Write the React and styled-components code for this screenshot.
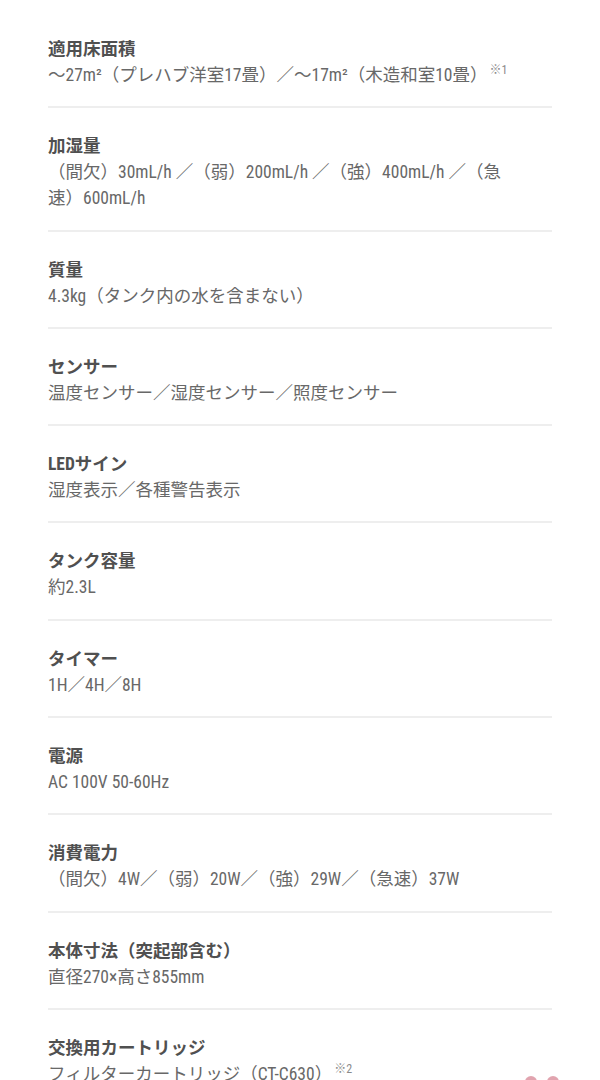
import React from 'react';
import styled, { createGlobalStyle } from 'styled-components';

const GlobalStyle = createGlobalStyle`
  html, body {
    margin: 0;
    padding: 0;
    background: #ffffff;
  }
  body {
    font-family: 'Roboto Condensed', 'Liberation Sans Narrow', 'Noto Sans CJK JP', sans-serif;
    -webkit-font-smoothing: antialiased;
  }
`;

const Page = styled.main`
  padding: 11px 48px 0;
  min-height: 1080px;
  box-sizing: border-box;
`;

const SpecList = styled.dl`
  margin: 0;
`;

const SpecRow = styled.div`
  padding: 25px 0 18.3px;
  border-bottom: 2px solid #eeeeee;

  &:last-child {
    border-bottom: none;
  }
`;

const Label = styled.dt`
  font-size: 17.5px;
  line-height: 26px;
  font-weight: 700;
  color: #505050;
`;

const Value = styled.dd`
  margin: 0;
  padding-right: 42px;
  font-size: 17.5px;
  line-height: 26px;
  color: #686868;
`;

const Note = styled.sup`
  font-size: 12px;
  color: #8a8a8a;
  margin-left: 2px;
  vertical-align: 7px;
  line-height: 0;
`;

const Peek = styled.svg`
  position: fixed;
  right: 38px;
  bottom: 0;
  width: 40px;
  height: 6px;
`;

const specs = [
  {
    label: '適用床面積',
    value: '〜27m²（プレハブ洋室17畳）／〜17m²（木造和室10畳）',
    note: '※1',
  },
  {
    label: '加湿量',
    value: '（間欠）30mL/h ／（弱）200mL/h ／（強）400mL/h ／（急速）600mL/h',
  },
  { label: '質量', value: '4.3kg（タンク内の水を含まない）' },
  { label: 'センサー', value: '温度センサー／湿度センサー／照度センサー' },
  { label: 'LEDサイン', value: '湿度表示／各種警告表示' },
  { label: 'タンク容量', value: '約2.3L' },
  { label: 'タイマー', value: '1H／4H／8H' },
  { label: '電源', value: 'AC 100V 50-60Hz' },
  { label: '消費電力', value: '（間欠）4W／（弱）20W／（強）29W／（急速）37W' },
  { label: '本体寸法（突起部含む）', value: '直径270×高さ855mm' },
  { label: '交換用カートリッジ', value: 'フィルターカートリッジ（CT-C630）', note: '※2' },
];

export default function App() {
  return (
    <>
      <GlobalStyle />
      <Page>
        <SpecList>
          {specs.map(spec => (
            <SpecRow key={spec.label}>
              <Label>{spec.label}</Label>
              <Value>
                {spec.value}
                {spec.note && <Note>{spec.note}</Note>}
              </Value>
            </SpecRow>
          ))}
        </SpecList>
      </Page>
      <Peek viewBox="0 0 40 6" aria-hidden="true">
        <circle cx="9" cy="8" r="6" fill="#c85a6e" opacity="0.55" />
        <circle cx="31" cy="8" r="6" fill="#c85a6e" opacity="0.55" />
      </Peek>
    </>
  );
}
